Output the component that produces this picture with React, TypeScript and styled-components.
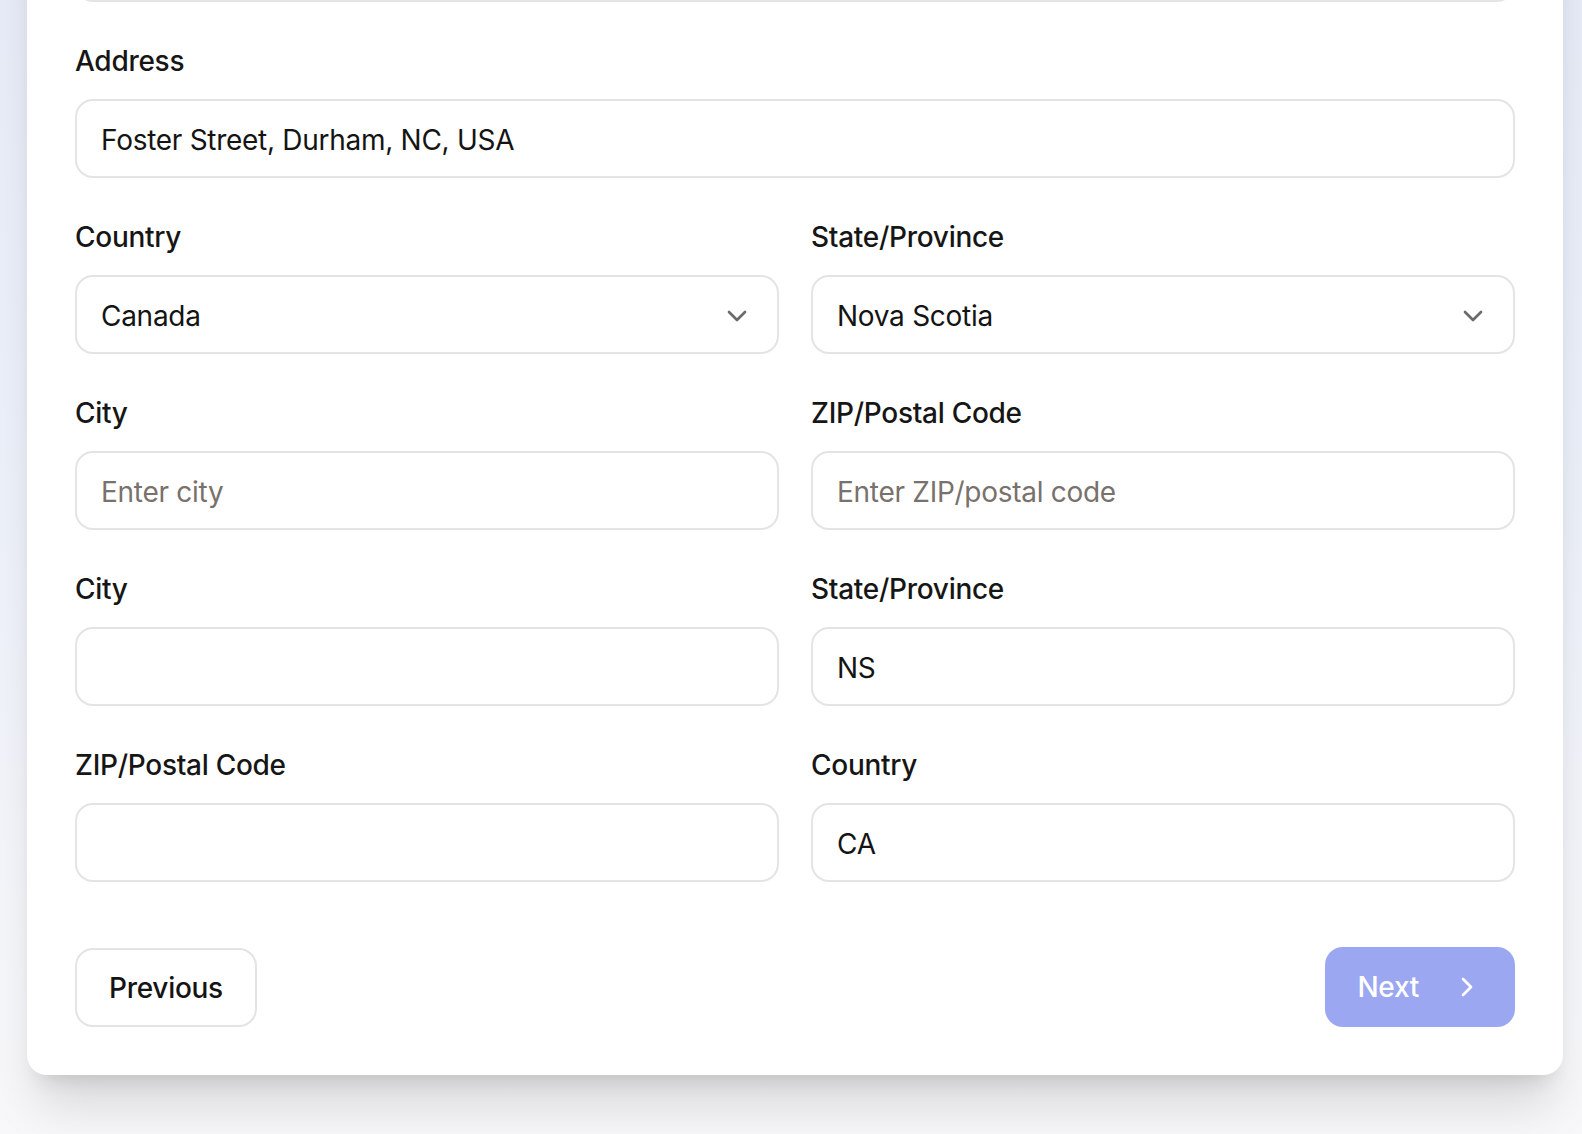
import React from 'react';
import styled, { createGlobalStyle } from 'styled-components';
import { ChevronDown, ChevronRight } from 'lucide-react';

const GlobalStyle = createGlobalStyle`
  html, body {
    margin: 0;
    padding: 0;
  }
  body {
    font-family: Inter, "Noto Sans", sans-serif;
    color: #141414;
    overflow: hidden;
  }
`;

const Page = styled.div`
  min-height: 1134px;
  background: linear-gradient(180deg, #e5ebf7 0%, #edf1fa 50%, #f6f7fa 85%, #f8f8f9 100%);
  padding: 0 19px 120px 27px;
  box-sizing: border-box;
`;

const Card = styled.div`
  width: 1536px;
  margin-top: -183px;
  box-sizing: border-box;
  background: #fff;
  border-radius: 20px;
  padding: 48px;
  box-shadow: 0 40px 50px -10px rgba(0, 0, 0, 0.13), 0 16px 20px -12px rgba(0, 0, 0, 0.12);
`;

const FieldGrid = styled.div`
  display: grid;
  grid-template-columns: 1fr 1fr;
  column-gap: 32px;
  row-gap: 39px;
`;

const Field = styled.div<{ $wide?: boolean }>`
  display: flex;
  flex-direction: column;
  min-width: 0;
  grid-column: ${p => (p.$wide ? '1 / -1' : 'auto')};
`;

const Label = styled.label`
  font-size: 28px;
  line-height: 40px;
  font-weight: 500;
  letter-spacing: -0.01em;
  color: #161616;
  margin-bottom: 18px;
`;

const Input = styled.input`
  height: 79px;
  box-sizing: border-box;
  width: 100%;
  border: 2px solid #e4e4e4;
  border-radius: 18px;
  padding: 3px 24px 0;
  font-family: inherit;
  font-size: 28px;
  letter-spacing: -0.01em;
  color: #141414;
  background: #fff;
  outline: none;
  &::placeholder {
    color: #78716c;
  }
`;

const SelectTrigger = styled.button`
  height: 79px;
  box-sizing: border-box;
  width: 100%;
  display: flex;
  align-items: center;
  justify-content: space-between;
  border: 2px solid #e4e4e4;
  border-radius: 18px;
  padding: 2px 24px 0;
  font-family: inherit;
  font-size: 28px;
  letter-spacing: -0.01em;
  color: #141414;
  background: #fff;
  text-align: left;
  cursor: pointer;
  svg {
    color: #6b6b6b;
    flex-shrink: 0;
  }
`;

const Actions = styled.div`
  display: flex;
  justify-content: space-between;
  align-items: center;
  margin-top: 65px;
`;

const SecondaryButton = styled.button`
  height: 79px;
  box-sizing: border-box;
  padding: 2px 32px 0;
  border: 2px solid #e4e4e4;
  border-radius: 18px;
  background: #fff;
  font-family: inherit;
  font-size: 28px;
  font-weight: 500;
  letter-spacing: -0.01em;
  color: #141414;
  cursor: pointer;
`;

const PrimaryButton = styled.button`
  height: 80px;
  box-sizing: border-box;
  display: flex;
  align-items: center;
  gap: 32px;
  padding: 0 32px;
  border: none;
  border-radius: 18px;
  background: #9ba7f0;
  font-family: inherit;
  font-size: 28px;
  font-weight: 500;
  letter-spacing: -0.01em;
  color: #fff;
  cursor: not-allowed;
`;

function App() {
  return (
    <Page>
      <GlobalStyle />
      <Card>
        <FieldGrid>
          <Field $wide>
            <Label>Search Address</Label>
            <Input readOnly />
          </Field>
          <Field $wide>
            <Label>Address</Label>
            <Input defaultValue="Foster Street, Durham, NC, USA" />
          </Field>
          <Field>
            <Label>Country</Label>
            <SelectTrigger type="button">
              <span>Canada</span>
              <ChevronDown size={32} strokeWidth={2} />
            </SelectTrigger>
          </Field>
          <Field>
            <Label>State/Province</Label>
            <SelectTrigger type="button">
              <span>Nova Scotia</span>
              <ChevronDown size={32} strokeWidth={2} />
            </SelectTrigger>
          </Field>
          <Field>
            <Label>City</Label>
            <Input placeholder="Enter city" />
          </Field>
          <Field>
            <Label>ZIP/Postal Code</Label>
            <Input placeholder="Enter ZIP/postal code" />
          </Field>
          <Field>
            <Label>City</Label>
            <Input defaultValue="" />
          </Field>
          <Field>
            <Label>State/Province</Label>
            <Input defaultValue="NS" />
          </Field>
          <Field>
            <Label>ZIP/Postal Code</Label>
            <Input defaultValue="" />
          </Field>
          <Field>
            <Label>Country</Label>
            <Input defaultValue="CA" />
          </Field>
        </FieldGrid>
        <Actions>
          <SecondaryButton type="button">Previous</SecondaryButton>
          <PrimaryButton type="button" disabled>
            Next
            <ChevronRight size={32} strokeWidth={2} />
          </PrimaryButton>
        </Actions>
      </Card>
    </Page>
  );
}

export default App;
